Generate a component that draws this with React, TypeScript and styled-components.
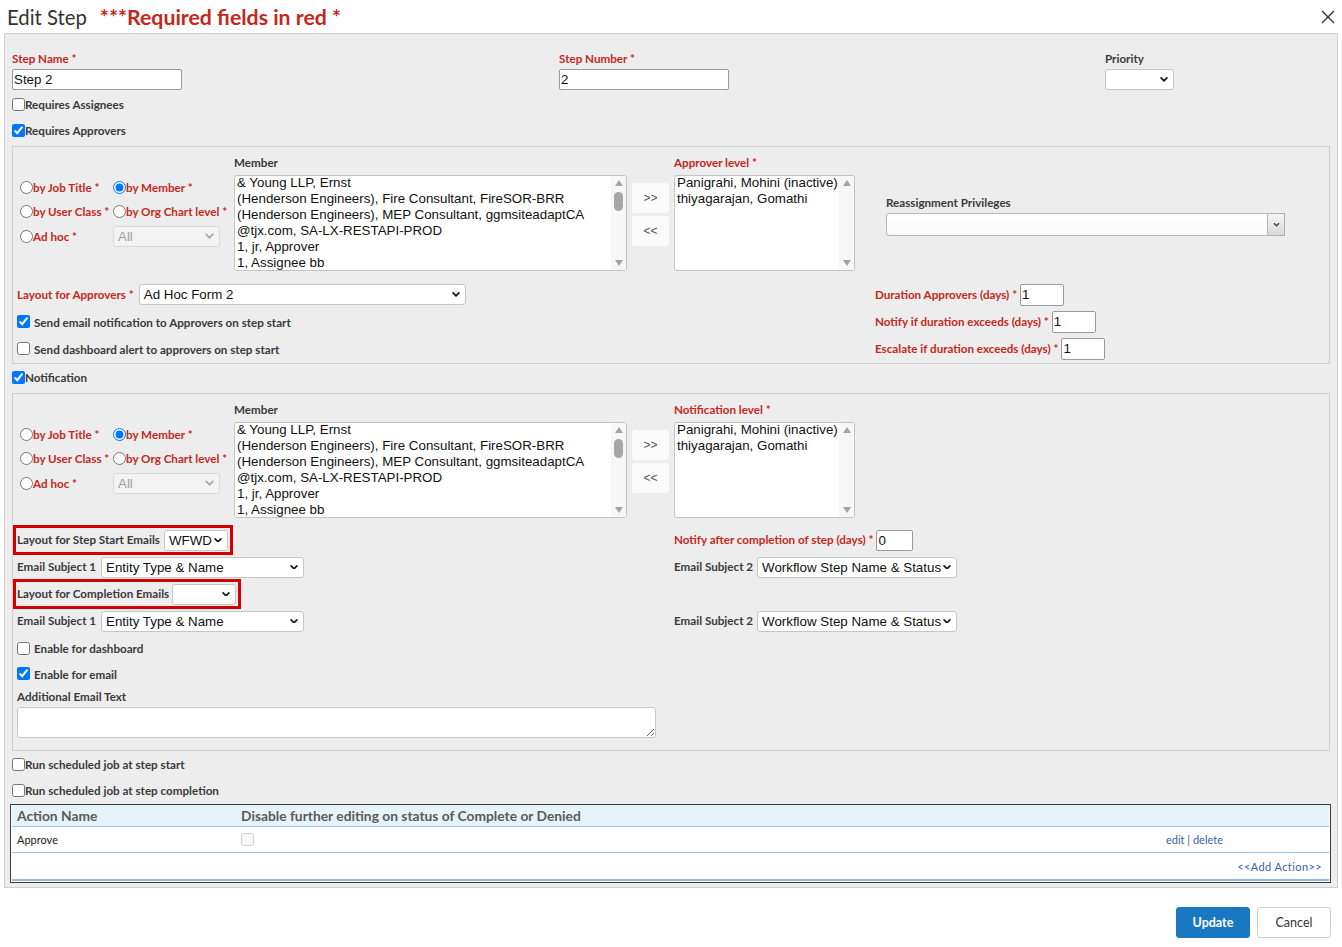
import React from "react";
import styled, { createGlobalStyle } from "styled-components";

const RED = "#c4281c";
const INK = "#3a3a3a";
const UI_FONT = `Lato, "Open Sans", "Liberation Sans", sans-serif`;
const FIELD_FONT = `"Liberation Sans", Arial, sans-serif`;
const LABEL_SIZE = "11.65px";
const FIELD_SIZE = "13.33px";

const GlobalStyle = createGlobalStyle`
  html, body { margin: 0; padding: 0; background: #fff; }
  body { font-family: ${UI_FONT}; color: ${INK}; }
  * { box-sizing: border-box; }
`;

const Dialog = styled.div`
  width: 1342px;
  height: 947px;
  background: #fff;
  display: flex;
  flex-direction: column;
`;

const Header = styled.div`
  height: 33px;
  display: flex;
  align-items: center;
  padding: 0 6px 0 7px;
`;

const Title = styled.h1`
  margin: 0;
  font: 400 20.3px ${UI_FONT};
  color: #333;
`;

const RequiredNote = styled.span`
  margin-left: 13px;
  font: 700 21.3px ${UI_FONT};
  color: ${RED};
  flex: 1;
`;

const CloseButton = styled.button`
  border: 0;
  background: none;
  padding: 0;
  width: 16px;
  height: 16px;
  display: flex;
  align-items: center;
  justify-content: center;
  color: #333;
`;

const Body = styled.div`
  margin: 0 4px;
  border: 1px solid #cfcfcf;
  background: #ededed;
  padding: 18px 7px 4px 7px;
`;

const TopGrid = styled.div`
  display: grid;
  grid-template-columns: 547px 546px 1fr;
  margin-bottom: 1px;
`;

const FieldLabel = styled.label<{ $required?: boolean; $mb?: number }>`
  display: block;
  font: 700 ${LABEL_SIZE}/14px ${UI_FONT};
  color: ${(p) => (p.$required ? RED : INK)};
  margin-bottom: ${(p) => p.$mb ?? 3}px;
  white-space: nowrap;
`;

const InlineLabel = styled.span<{ $required?: boolean }>`
  font: 700 ${LABEL_SIZE}/14px ${UI_FONT};
  color: ${(p) => (p.$required ? RED : INK)};
  white-space: nowrap;
`;

const TextInput = styled.input<{ $w: number; $h?: number }>`
  display: block;
  flex-shrink: 0;
  width: ${(p) => p.$w}px;
  height: ${(p) => p.$h ?? 21}px;
  border: 1px solid #9a9a9a;
  border-radius: 2px;
  padding: 0 1px;
  background: #fff;
  font: ${FIELD_SIZE} ${FIELD_FONT};
  color: #111;
  outline: none;
`;

const CheckRow = styled.label<{ $h?: number; $gap?: number }>`
  display: flex;
  align-items: center;
  height: ${(p) => p.$h ?? 26}px;
  gap: ${(p) => p.$gap ?? 0}px;
  font: 700 ${LABEL_SIZE}/14px ${UI_FONT};
  color: ${INK};
  white-space: nowrap;
  input {
    margin: 0;
    width: 13px;
    height: 13px;
  }
  span {
    padding-top: 2px;
  }
`;

const SubPanel = styled.div`
  margin-top: 3px;
  border: 1px solid #cfcfcf;
  background: #ededed;
`;

const PickerRow = styled.div`
  display: flex;
  padding-top: 9px;
`;

const PickerColumn = styled.div<{ $w?: number; $pt?: number }>`
  ${(p) => (p.$w ? `width: ${p.$w}px; flex-shrink: 0;` : "flex: 1;")}
  padding-top: ${(p) => p.$pt ?? 0}px;
  display: flex;
  flex-direction: column;
`;

const RadioGrid = styled.div`
  display: grid;
  grid-template-columns: 100px 121px;
  grid-template-rows: 24px 24px 26px;
  align-items: center;
`;

const RadioOption = styled.label<{ $indent?: number }>`
  display: flex;
  align-items: center;
  padding-left: ${(p) => p.$indent ?? 0}px;
  font: 700 ${LABEL_SIZE}/14px ${UI_FONT};
  color: ${RED};
  white-space: nowrap;
  input {
    margin: 0;
    width: 13px;
    height: 13px;
  }
  span {
    padding-top: 2px;
  }
`;

const SelectBox = styled.div<{ $w: number; $h?: number; $disabled?: boolean }>`
  display: flex;
  align-items: center;
  justify-content: space-between;
  flex-shrink: 0;
  width: ${(p) => p.$w}px;
  height: ${(p) => p.$h ?? 21}px;
  border: 1px solid ${(p) => (p.$disabled ? "#dadada" : "#c6c6c6")};
  border-radius: 3px;
  background: ${(p) => (p.$disabled ? "#f3f3f3" : "#fff")};
  color: ${(p) => (p.$disabled ? "#a0a0a0" : "#111")};
  font: ${FIELD_SIZE} ${FIELD_FONT};
  padding: 0 5px 0 4px;
  white-space: nowrap;
  svg {
    flex-shrink: 0;
  }
`;

const ListBox = styled.div<{ $w: number }>`
  display: flex;
  width: ${(p) => p.$w}px;
  height: 96px;
  border: 1px solid #c4c4c4;
  border-radius: 3px;
  background: #fff;
  overflow: hidden;
`;

const ListItems = styled.div`
  flex: 1;
  margin-top: -1px;
  padding: 0 0 0 2px;
  font: ${FIELD_SIZE}/16px ${FIELD_FONT};
  color: #111;
  white-space: nowrap;
  overflow: hidden;
`;

const ScrollTrack = styled.div`
  width: 15px;
  display: flex;
  flex-direction: column;
  align-items: center;
  background: #f7f7f7;
  padding: 4px 0;
`;

const ScrollArrow = styled.span<{ $dir: "up" | "down" }>`
  width: 0;
  height: 0;
  border-left: 4.5px solid transparent;
  border-right: 4.5px solid transparent;
  ${(p) =>
    p.$dir === "up"
      ? "border-bottom: 6px solid #a3a3a3;"
      : "border-top: 6px solid #a3a3a3;"}
`;

const ScrollThumb = styled.span`
  width: 9px;
  height: 19px;
  border-radius: 5px;
  background: #a6a6a6;
  margin-top: 6px;
`;

const ScrollSpacer = styled.span`
  flex: 1;
`;

const MoveButton = styled.button`
  width: 37px;
  height: 30px;
  margin-bottom: 3px;
  border: 0;
  border-radius: 3px;
  background: #fafafa;
  font: 12px ${FIELD_FONT};
  color: #555;
  padding: 0;
`;

const Combo = styled.div`
  display: flex;
  width: 399px;
  height: 23px;
`;

const ComboField = styled.div`
  flex: 1;
  border: 1px solid #b3b5c3;
  border-radius: 3px 0 0 3px;
  background: linear-gradient(#ffffff, #f9f9f9);
`;

const ComboButton = styled.div`
  width: 17px;
  border: 1px solid #b0b0b0;
  border-left: 0;
  background: linear-gradient(#f6f6f6, #d8d8d8);
  display: flex;
  align-items: center;
  justify-content: center;
`;

const ApproverFooter = styled.div`
  display: grid;
  grid-template-columns: 858px 1fr;
  padding: 10px 0 1px 4px;
`;

const FieldStack = styled.div`
  display: flex;
  flex-direction: column;
`;

const InlineRow = styled.div<{ $h?: number; $gap?: number }>`
  display: flex;
  align-items: center;
  height: ${(p) => p.$h ?? 27}px;
  gap: ${(p) => p.$gap ?? 3}px;
`;

const EmailGrid = styled.div`
  display: grid;
  grid-template-columns: 661px 1fr;
  grid-template-rows: 30px 24px 30px 24px;
  align-items: center;
  margin-top: 7px;
`;

const Highlight = styled.div<{ $gap: number }>`
  justify-self: start;
  display: inline-flex;
  align-items: center;
  gap: ${(p) => p.$gap}px;
  height: 30px;
  border: 3px solid #d40000;
  padding: 0 2px 0 1px;
`;

const SubjectRow = styled.div<{ $pl?: number; $gap: number }>`
  display: flex;
  align-items: center;
  gap: ${(p) => p.$gap}px;
  padding-left: ${(p) => p.$pl ?? 0}px;
`;

const NotifyExtras = styled.div`
  padding: 2px 0 12px 4px;
`;

const AdditionalLabel = styled(FieldLabel)`
  margin-top: 4px;
`;

const TextArea = styled.textarea`
  display: block;
  width: 639px;
  height: 31px;
  border: 1px solid #c8c8c8;
  border-radius: 3px;
  background: #fff;
  font: 13px ${FIELD_FONT};
  resize: vertical;
`;

const TableFrame = styled.div`
  margin: 1px -1px 0 -2px;
  border: 1px solid #3c3c3c;
  background: #fff;
  padding: 0 1px 1px 1px;
`;

const TableRow = styled.div<{ $head?: boolean; $h: number }>`
  display: grid;
  grid-template-columns: 224px 1fr auto;
  align-items: center;
  height: ${(p) => p.$h}px;
  background: ${(p) => (p.$head ? "#e7f3fb" : "#fff")};
  border-bottom: 1px solid #9ec4e6;
  font: ${(p) => (p.$head ? `700 13.8px ${UI_FONT}` : `400 11px ${UI_FONT}`)};
  color: ${(p) => (p.$head ? "#5a5a5a" : "#222")};
  > * {
    padding-left: 5px;
  }
  input {
    margin: 0 0 0 5px;
    width: 13px;
    height: 13px;
    justify-self: start;
  }
`;

const RowLinks = styled.span`
  padding-right: 106px;
  color: #3a62a8;
  a {
    color: inherit;
    text-decoration: none;
  }
`;

const AddRow = styled.div`
  height: 28px;
  display: flex;
  align-items: center;
  justify-content: flex-end;
  padding-right: 7px;
  border-bottom: 2px solid #8dbbe2;
  font: 11px ${UI_FONT};
  a {
    color: #3a62a8;
    text-decoration: none;
    letter-spacing: 0.4px;
  }
`;

const Footer = styled.div`
  display: flex;
  justify-content: flex-end;
  gap: 7px;
  padding: 19px 11px 0 0;
`;

const ActionButton = styled.button<{ $primary?: boolean }>`
  width: 74px;
  height: 31px;
  border-radius: 3px;
  border: 1px solid ${(p) => (p.$primary ? "#1a78c2" : "#d0d0d0")};
  background: ${(p) => (p.$primary ? "#1a78c2" : "#fff")};
  color: ${(p) => (p.$primary ? "#fff" : "#333")};
  font: ${(p) => (p.$primary ? 700 : 400)} 12.5px ${UI_FONT};
`;

const Chevron = ({ size = 8 }: { size?: number }) => (
  <svg width={size} height={size * 0.6} viewBox="0 0 8 5" fill="none">
    <path d="M1 1 L4 4 L7 1" stroke="#1a1a1a" strokeWidth="1.8" strokeLinecap="round" strokeLinejoin="round" />
  </svg>
);

type SelectProps = { w: number; h?: number; value?: string; disabled?: boolean };

const Select: React.FC<SelectProps> = ({ w, h, value, disabled }) => (
  <SelectBox $w={w} $h={h} $disabled={disabled}>
    <span>{value}</span>
    {disabled ? (
      <svg width="9" height="6" viewBox="0 0 8 5" fill="none">
        <path d="M1 1 L4 4 L7 1" stroke="#a8a8a8" strokeWidth="1.5" strokeLinecap="round" />
      </svg>
    ) : (
      <Chevron />
    )}
  </SelectBox>
);

const memberOptions = [
  "& Young LLP, Ernst",
  "(Henderson Engineers), Fire Consultant, FireSOR-BRR",
  "(Henderson Engineers), MEP Consultant, ggmsiteadaptCA",
  "@tjx.com, SA-LX-RESTAPI-PROD",
  "1, jr, Approver",
  "1, Assignee bb",
];

const levelOptions = ["Panigrahi, Mohini (inactive)", "thiyagarajan, Gomathi"];

const Scrollbar: React.FC<{ thumb?: boolean }> = ({ thumb }) => (
  <ScrollTrack>
    <ScrollArrow $dir="up" />
    {thumb && <ScrollThumb />}
    <ScrollSpacer />
    <ScrollArrow $dir="down" />
  </ScrollTrack>
);

type PickerProps = {
  group: string;
  levelLabel: string;
  extra?: React.ReactNode;
};

const Picker: React.FC<PickerProps> = ({ group, levelLabel, extra }) => (
  <PickerRow>
    <PickerColumn $w={221} $pt={19}>
      <RadioGrid>
        <RadioOption $indent={7}>
          <input type="radio" name={group} />
          <span>by Job Title *</span>
        </RadioOption>
        <RadioOption>
          <input type="radio" name={group} defaultChecked />
          <span>by Member *</span>
        </RadioOption>
        <RadioOption $indent={7}>
          <input type="radio" name={group} />
          <span>by User Class *</span>
        </RadioOption>
        <RadioOption>
          <input type="radio" name={group} />
          <span>by Org Chart level *</span>
        </RadioOption>
        <RadioOption $indent={7}>
          <input type="radio" name={group} />
          <span>Ad hoc *</span>
        </RadioOption>
        <Select w={107} h={21} value="All" disabled />
      </RadioGrid>
    </PickerColumn>
    <PickerColumn $w={398}>
      <FieldLabel $mb={5}>Member</FieldLabel>
      <ListBox $w={393}>
        <ListItems>
          {memberOptions.map((m) => (
            <div key={m}>{m}</div>
          ))}
        </ListItems>
        <Scrollbar thumb />
      </ListBox>
    </PickerColumn>
    <PickerColumn $w={42} $pt={27}>
      <MoveButton>&gt;&gt;</MoveButton>
      <MoveButton>&lt;&lt;</MoveButton>
    </PickerColumn>
    <PickerColumn $w={212}>
      <FieldLabel $required $mb={5}>
        {levelLabel}
      </FieldLabel>
      <ListBox $w={181}>
        <ListItems>
          {levelOptions.map((m) => (
            <div key={m}>{m}</div>
          ))}
        </ListItems>
        <Scrollbar />
      </ListBox>
    </PickerColumn>
    <PickerColumn $pt={40}>{extra}</PickerColumn>
  </PickerRow>
);

export default function App() {
  return (
    <Dialog>
      <GlobalStyle />
      <Header>
        <Title>Edit Step</Title>
        <RequiredNote>***Required fields in red *</RequiredNote>
        <CloseButton aria-label="Close">
          <svg width="14" height="14" viewBox="0 0 14 14">
            <path d="M1 1 L13 13 M13 1 L1 13" stroke="#333" strokeWidth="1.4" />
          </svg>
        </CloseButton>
      </Header>

      <Body>
        <TopGrid>
          <div>
            <FieldLabel $required>Step Name *</FieldLabel>
            <TextInput $w={170} defaultValue="Step 2" />
          </div>
          <div>
            <FieldLabel $required>Step Number *</FieldLabel>
            <TextInput $w={170} defaultValue="2" />
          </div>
          <div>
            <FieldLabel>Priority</FieldLabel>
            <Select w={69} h={21} />
          </div>
        </TopGrid>

        <CheckRow>
          <input type="checkbox" />
          <span>Requires Assignees</span>
        </CheckRow>
        <CheckRow>
          <input type="checkbox" defaultChecked />
          <span>Requires Approvers</span>
        </CheckRow>

        <SubPanel>
          <Picker
            group="approver"
            levelLabel="Approver level *"
            extra={
              <>
                <FieldLabel>Reassignment Privileges</FieldLabel>
                <Combo>
                  <ComboField />
                  <ComboButton>
                    <svg width="7" height="5" viewBox="0 0 8 5" fill="none">
                      <path d="M1 1 L4 4 L7 1" stroke="#444" strokeWidth="1.6" />
                    </svg>
                  </ComboButton>
                </Combo>
              </>
            }
          />
          <ApproverFooter>
            <FieldStack>
              <InlineRow $gap={5}>
                <InlineLabel $required>Layout for Approvers *</InlineLabel>
                <Select w={327} h={21} value="Ad Hoc Form 2" />
              </InlineRow>
              <CheckRow $h={27} $gap={4}>
                <input type="checkbox" defaultChecked />
                <span>Send email notification to Approvers on step start</span>
              </CheckRow>
              <CheckRow $h={27} $gap={4}>
                <input type="checkbox" />
                <span>Send dashboard alert to approvers on step start</span>
              </CheckRow>
            </FieldStack>
            <FieldStack>
              <InlineRow>
                <InlineLabel $required>Duration Approvers (days) *</InlineLabel>
                <TextInput $w={44} $h={22} defaultValue="1" />
              </InlineRow>
              <InlineRow>
                <InlineLabel $required>Notify if duration exceeds (days) *</InlineLabel>
                <TextInput $w={44} $h={22} defaultValue="1" />
              </InlineRow>
              <InlineRow>
                <InlineLabel $required>Escalate if duration exceeds (days) *</InlineLabel>
                <TextInput $w={44} $h={22} defaultValue="1" />
              </InlineRow>
            </FieldStack>
          </ApproverFooter>
        </SubPanel>

        <CheckRow>
          <input type="checkbox" defaultChecked />
          <span>Notification</span>
        </CheckRow>

        <SubPanel>
          <Picker group="notification" levelLabel="Notification level *" />
          <EmailGrid>
            <Highlight $gap={4}>
              <InlineLabel>Layout for Step Start Emails</InlineLabel>
              <Select w={64} h={21} value="WFWD" />
            </Highlight>
            <SubjectRow $gap={3}>
              <InlineLabel $required>Notify after completion of step (days) *</InlineLabel>
              <TextInput $w={37} $h={21} defaultValue="0" />
            </SubjectRow>
            <SubjectRow $pl={4} $gap={5}>
              <InlineLabel>Email Subject 1</InlineLabel>
              <Select w={203} value="Entity Type & Name" />
            </SubjectRow>
            <SubjectRow $gap={4}>
              <InlineLabel>Email Subject 2</InlineLabel>
              <Select w={200} value="Workflow Step Name & Status" />
            </SubjectRow>
            <Highlight $gap={3}>
              <InlineLabel>Layout for Completion Emails</InlineLabel>
              <Select w={64} h={21} />
            </Highlight>
            <div />
            <SubjectRow $pl={4} $gap={5}>
              <InlineLabel>Email Subject 1</InlineLabel>
              <Select w={203} value="Entity Type & Name" />
            </SubjectRow>
            <SubjectRow $gap={4}>
              <InlineLabel>Email Subject 2</InlineLabel>
              <Select w={200} value="Workflow Step Name & Status" />
            </SubjectRow>
          </EmailGrid>
          <NotifyExtras>
            <CheckRow $gap={4}>
              <input type="checkbox" />
              <span>Enable for dashboard</span>
            </CheckRow>
            <CheckRow $h={25} $gap={4}>
              <input type="checkbox" defaultChecked />
              <span>Enable for email</span>
            </CheckRow>
            <AdditionalLabel>Additional Email Text</AdditionalLabel>
            <TextArea />
          </NotifyExtras>
        </SubPanel>

        <CheckRow>
          <input type="checkbox" />
          <span>Run scheduled job at step start</span>
        </CheckRow>
        <CheckRow>
          <input type="checkbox" />
          <span>Run scheduled job at step completion</span>
        </CheckRow>

        <TableFrame>
          <TableRow $head $h={22}>
            <span>Action Name</span>
            <span>Disable further editing on status of Complete or Denied</span>
            <span />
          </TableRow>
          <TableRow $h={26}>
            <span>Approve</span>
            <input type="checkbox" disabled />
            <RowLinks>
              <a href="#edit">edit</a> | <a href="#delete">delete</a>
            </RowLinks>
          </TableRow>
          <AddRow>
            <a href="#add">&lt;&lt;Add Action&gt;&gt;</a>
          </AddRow>
        </TableFrame>
      </Body>

      <Footer>
        <ActionButton $primary>Update</ActionButton>
        <ActionButton>Cancel</ActionButton>
      </Footer>
    </Dialog>
  );
}
